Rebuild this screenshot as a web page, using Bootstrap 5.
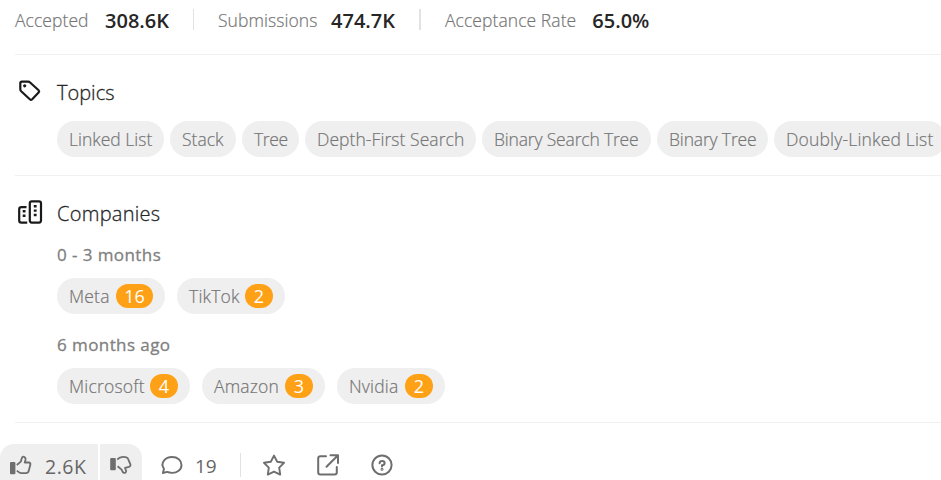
<!DOCTYPE html>
<html lang="en">
<head>
<meta charset="utf-8">
<meta name="viewport" content="width=device-width, initial-scale=1">
<title>Problem details</title>
<link href="https://cdn.jsdelivr.net/npm/bootstrap@5.3.0/dist/css/bootstrap.min.css" rel="stylesheet">
<style>
body{font-family:"Open Sans","Noto Sans",sans-serif;font-size:17.5px;line-height:24px;color:#262626;background:#fff;height:480px;overflow:hidden}
.stats{height:54px;padding:8px 0 0 15px}
.stat-a{width:178px}.stat-b{width:201px}
.lbl{color:#757575;font-weight:300;-webkit-text-stroke:.2px #757575;letter-spacing:.07px;white-space:nowrap}
.val{font-weight:600;font-size:20px;color:#262626;padding-top:1px}
.split{width:1px;height:21px;background:#e2e2e2;margin:1px 24px 0 0;flex:none}
.split-wide{width:2px}
.rule{height:1px;margin-left:15px;background:#f0f0f0}
.ttl{font-size:20px;line-height:28px;color:#262626;font-weight:300;-webkit-text-stroke:.3px #262626}
.ttl-wide{letter-spacing:.28px}
.topics{height:120px;padding:24px 0 0 15px}
.companies{height:246px;padding:24px 0 0 15px}
.ico-col{width:42px;flex:none}
.chips{gap:6px;margin-top:14px}
.chips-wide{gap:12px;margin-top:11px}
.chip{height:36px;padding:0 12px 1px;border-radius:18px;background:#efefef;color:#757575;font-weight:300;-webkit-text-stroke:.2px #757575;flex:none;white-space:nowrap}
.chips-wide .chip{padding:0 12px;letter-spacing:.2px}
.w107{width:107px}.w66{width:66px}.w57{width:57px}.w171{width:171px;letter-spacing:.06px}.w169{width:169px;letter-spacing:-.17px}.w111{width:111px;letter-spacing:-.15px}.w172{width:172px;letter-spacing:.18px}
.w57{letter-spacing:-.4px}
.w108{width:108px}.w133{width:133px}.w123{width:123px}
.period{font-size:17px;line-height:24px;color:#808080;font-weight:400;-webkit-text-stroke:.3px #808080;letter-spacing:.42px;margin-top:15px}
.period-next{margin-top:19px}
.count{width:28px;height:24px;border-radius:12px;background:#ffa116;color:#fff;font-size:18px;font-weight:400;letter-spacing:0;-webkit-text-stroke:0;flex:none}
.count-2{width:37px}
.foot{padding-top:21px;color:#6e6e6e}
.foot svg,.ico-col svg{flex:none;display:block;overflow:visible}
.vote{height:48px;background:#efefef;padding:9px 0 0 9px;flex:none}
.vote-up{width:98px;border-top-left-radius:14px}
.vote-down{width:42px;border-top-right-radius:14px;margin-left:2px}
.num{font-size:19.5px;line-height:26px;color:#666;padding-top:1px}
.vote .num{letter-spacing:.5px}
.comments{width:82px;padding-left:19px;flex:none}
.comments .num{margin-left:4px;font-size:19px;padding-top:0}
.tool{margin-top:9px}
.foot .split{height:24px}
</style>
<script src="https://cdn.jsdelivr.net/npm/bootstrap@5.3.0/dist/js/bootstrap.bundle.min.js"></script>
</head>
<body>
<header class="stats d-flex">
<div class="stat-a d-flex justify-content-between flex-shrink-0 pe-4"><span class="lbl">Accepted</span><span class="val">308.6K</span></div>
<i class="split"></i>
<div class="stat-b d-flex justify-content-between flex-shrink-0 pe-4"><span class="lbl">Submissions</span><span class="val">474.7K</span></div>
<i class="split split-wide"></i>
<div class="d-flex gap-3"><span class="lbl">Acceptance Rate</span><span class="val">65.0%</span></div>
</header>
<div class="rule"></div>
<section class="topics d-flex">
<div class="ico-col"><svg width="30" height="28" viewBox="0 0 30 28" fill="none" stroke="#1a1a1a" stroke-width="2.2" stroke-linejoin="round"><path d="M5.3 4.3 Q5.3 2.6 6.9 2.6 L13 2.6 Q14.2 2.6 15.1 3.5 L23.6 11.2 Q24.7 12.3 23.6 13.5 L17.2 20.3 Q16 21.4 14.8 20.3 L6.2 12.3 Q5.3 11.4 5.3 10.2Z"/><circle cx="9.7" cy="6.8" r="1.6" fill="#1a1a1a" stroke="none"/></svg></div>
<div>
<div class="ttl">Topics</div>
<div class="chips d-flex">
<span class="chip w107 d-flex align-items-center">Linked List</span><span class="chip w66 d-flex align-items-center">Stack</span><span class="chip w57 d-flex align-items-center">Tree</span><span class="chip w171 d-flex align-items-center">Depth-First Search</span><span class="chip w169 d-flex align-items-center">Binary Search Tree</span><span class="chip w111 d-flex align-items-center">Binary Tree</span><span class="chip w172 d-flex align-items-center">Doubly-Linked List</span>
</div>
</div>
</section>
<div class="rule"></div>
<section class="companies d-flex">
<div class="ico-col"><svg width="30" height="28" viewBox="0 0 30 28" fill="none" stroke="#1a1a1a" stroke-width="2.2" stroke-linejoin="round"><path d="M11.5 7.1H6.4Q4.2 7.1 4.2 9.3V20.4Q4.2 22.6 6.4 22.6H12.2"/><rect x="14.8" y="1.3" width="11.2" height="21.3" rx="2"/><path d="M7.7 10h2.8v2.6H7.7zM7.7 14.5h2.8v2.6H7.7zM18.8 5h2.8v2.4h-2.8zM18.8 9.4h2.8v2.4h-2.8zM18.8 13.8h2.8v2.4h-2.8z" fill="#1a1a1a" stroke="none"/></svg></div>
<div>
<div class="ttl ttl-wide">Companies</div>
<div class="period">0 - 3 months</div>
<div class="chips chips-wide d-flex">
<span class="chip w108 d-flex align-items-center justify-content-between">Meta <span class="count count-2 d-flex align-items-center justify-content-center">16</span></span>
<span class="chip w108 d-flex align-items-center justify-content-between">TikTok <span class="count d-flex align-items-center justify-content-center">2</span></span>
</div>
<div class="period period-next">6 months ago</div>
<div class="chips chips-wide d-flex">
<span class="chip w133 d-flex align-items-center justify-content-between">Microsoft <span class="count d-flex align-items-center justify-content-center">4</span></span>
<span class="chip w123 d-flex align-items-center justify-content-between">Amazon <span class="count d-flex align-items-center justify-content-center">3</span></span>
<span class="chip w108 d-flex align-items-center justify-content-between">Nvidia <span class="count d-flex align-items-center justify-content-center">2</span></span>
</div>
</div>
</section>
<div class="rule"></div>
<footer class="foot d-flex">
<div class="vote vote-up d-flex">
<svg width="24" height="24" viewBox="0 0 24 24" fill="none" stroke="currentColor" stroke-width="1.8" stroke-linejoin="round"><rect x="1" y="9" width="5.4" height="12.2" rx="1" fill="currentColor" stroke="none"/><path d="M7.8 12 L11.8 8.6 L12.9 4.9 Q13.5 3.1 15 3.9 Q17 4.8 16.5 7 L15.7 9.5 H19.7 Q21.8 9.8 21.4 11.6 L19.7 18 Q19.1 20.1 17 20.1 H12.1 Q10.6 20 9.5 18.9 L7.8 17.6"/></svg>
<span class="num ps-2 ms-1">2.6K</span>
</div>
<div class="vote vote-down">
<svg width="24" height="24" viewBox="0 0 24 24" fill="none" stroke="currentColor" stroke-width="1.8" stroke-linejoin="round"><rect x="1.2" y="5" width="5.6" height="12.2" rx="1" fill="currentColor" stroke="none"/><path d="M8.2 6.4 L11 4.6 Q14.2 3.2 17.4 4.3 Q18.8 4.8 19.3 6.3 L21.5 11.6 Q21.8 13.2 20 13.8 L16 14.9 L17.2 18 Q16.9 20.2 15 19.9 Q13.6 19.4 12.6 16.6 L8.6 13.2"/></svg>
</div>
<div class="comments d-flex tool">
<svg width="30" height="26" viewBox="3 0 30 26" fill="none" stroke="currentColor" stroke-width="1.9" stroke-linejoin="round"><path d="M4.9 20 L6 15.8 C1.7 9.5 7.5 4 14 4 C19.6 4 23.5 7.2 23.5 11.9 C23.5 16.8 19 20.1 14 19.9 C12 19.8 10.5 19.5 9.2 18.9Z"/></svg>
<span class="num">19</span>
</div>
<i class="split tool ms-3"></i>
<svg class="tool" width="20" height="26" viewBox="265 453 20 26" fill="none" stroke="currentColor" stroke-width="1.9" stroke-linejoin="round"><path d="M274 455.6 L277.2 461.8 L284 462.8 L279.2 467.7 L280.2 474.6 L274 471.6 L267.8 474.6 L268.8 467.7 L264 462.8 L270.8 461.8Z"/></svg>
<svg class="tool" width="98" height="26" viewBox="285 453 98 26" fill="none" stroke="currentColor" stroke-width="2" stroke-linejoin="round" stroke-linecap="round"><path d="M326 456.2H320.5Q318.2 456.2 318.2 458.5V472.3Q318.2 474.6 320.5 474.6H334.5Q336.8 474.6 336.8 472.3V467M330.5 455.3H338V463M338 455.3L326.5 466.8"/><circle cx="382" cy="465" r="9.6"/><path d="M379.6 463.2Q379.7 460.9 382.1 460.9Q384.6 460.9 384.6 463.1Q384.5 465.1 382 465.3V466.5"/><circle cx="382" cy="469.2" r=".5"/></svg>
</footer>
</body>
</html>
